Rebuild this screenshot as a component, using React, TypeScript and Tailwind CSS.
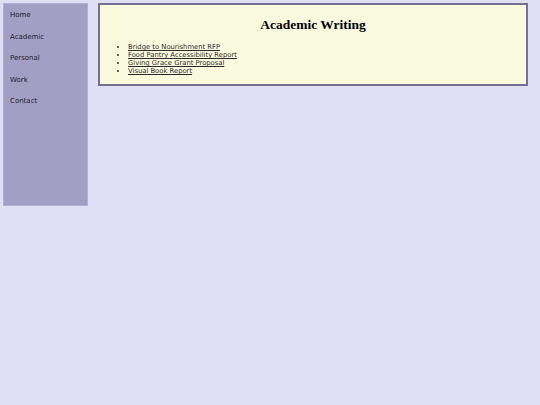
export default function App() {
  const nav = ["Home", "Academic", "Personal", "Work", "Contact"];
  const links = [
    "Bridge to Nourishment RFP",
    "Food Pantry Accessibility Report",
    "Giving Grace Grant Proposal",
    "Visual Book Report",
  ];
  return (
    <div className="min-h-[405px] w-[540px] bg-[#e1dff6] p-[3px] flex items-start gap-[10px]" style={{ fontFamily: '"DejaVu Sans", Verdana, sans-serif' }}>
      <div className="w-[85px] h-[203px] bg-[#a39fc4] border border-[#b3b0d3] pt-[6px] pl-[6px] flex flex-col">
        {nav.map((n) => (
          <div key={n} className="h-[21.5px] text-[7px] leading-[10px] text-[#1c1a2e]">{n}</div>
        ))}
      </div>
      <div className="w-[430px] h-[83px] bg-[#fafadf] border-2 border-[#757291] pt-[12px]">
        <h1 className="text-center text-[13.5px] font-bold leading-[16px] text-black" style={{ fontFamily: '"Liberation Serif", "Times New Roman", serif' }}>Academic Writing</h1>
        <ul className="mt-[10px] pl-[28px] list-disc text-[6.8px] leading-[8px] text-[#2a2a2a]">
          {links.map((l) => (
            <li key={l}><a href="#" className="underline">{l}</a></li>
          ))}
        </ul>
      </div>
    </div>
  );
}
